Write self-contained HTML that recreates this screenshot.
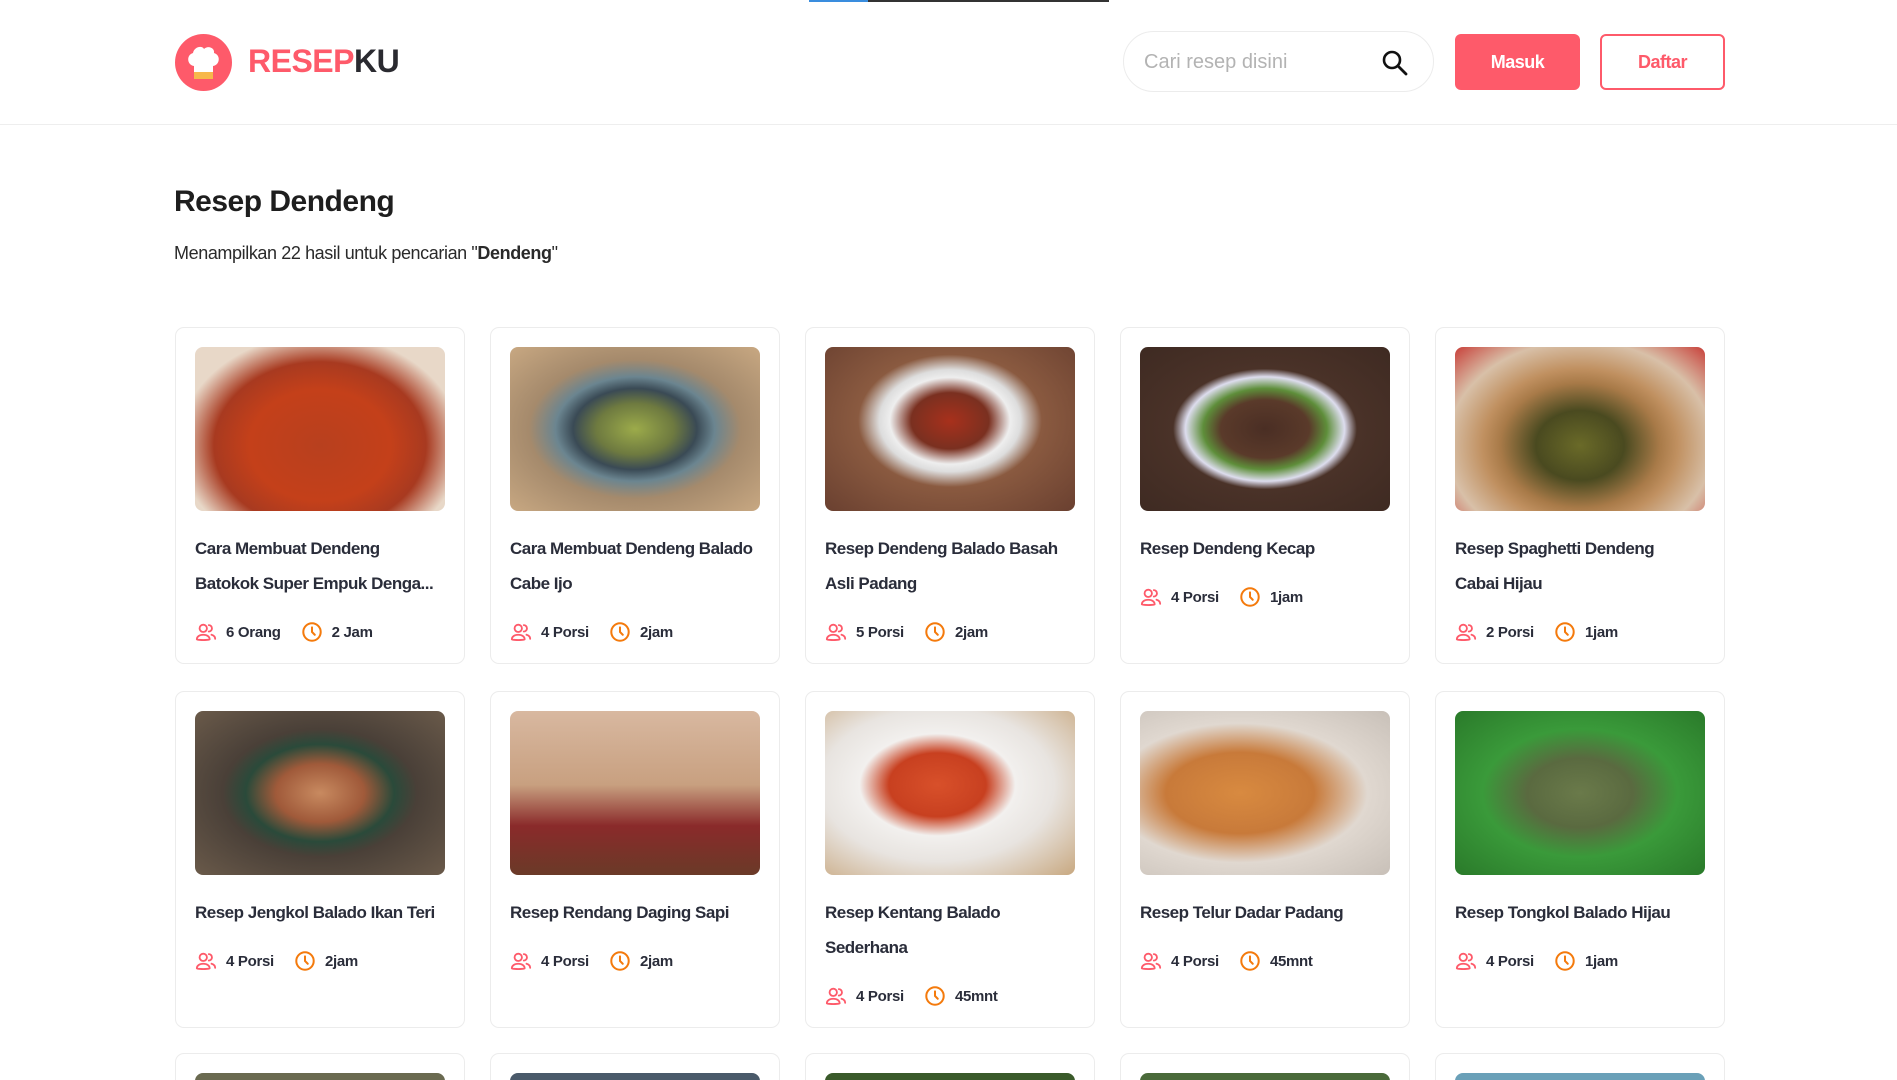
<!DOCTYPE html>
<html style="height:1080px;overflow:hidden"><head><meta charset="utf-8">
<style>
*{box-sizing:border-box;margin:0;padding:0}
body{width:1897px;height:1080px;overflow:hidden;background:#fff;font-family:"Liberation Sans",Roboto,sans-serif;color:#222;position:relative}
.bar{position:absolute;top:0;left:809px;width:300px;height:2px;background:#333}
.bar i{position:absolute;left:0;top:0;width:59px;height:2px;background:#3a8dde}
header{position:absolute;top:0;left:0;width:1897px;height:125px;border-bottom:1px solid #eee}
.logo{position:absolute;left:175px;top:34px;width:57px;height:57px;border-radius:50%;background:#fe5a6a}
.brand{position:absolute;left:248px;top:43px;font-size:32px;font-weight:bold;letter-spacing:-0.5px;color:#fe5a6a}
.brand b{color:#2a2a30}
.search{position:absolute;left:1123px;top:31px;width:311px;height:61px;border:1px solid #ececec;border-radius:31px}
.search span{position:absolute;left:20px;top:19px;font-size:20px;color:#b3b3b3}
.search svg{position:absolute;left:257px;top:17px}
.masuk{position:absolute;left:1455px;top:34px;width:125px;height:56px;background:#fe5a6a;border-radius:6px;color:#fff;font-weight:bold;font-size:18px;text-align:center;line-height:56px;letter-spacing:-0.5px}
.daftar{position:absolute;left:1600px;top:34px;width:125px;height:56px;border:2px solid #fe5a6a;border-radius:6px;color:#fe5a6a;font-weight:bold;font-size:18px;text-align:center;line-height:52px;letter-spacing:-0.5px}
h1{position:absolute;left:174px;top:185px;font-size:30px;font-weight:bold;color:#1e1e1e;letter-spacing:-0.5px}
.sub{position:absolute;left:174px;top:243px;font-size:18px;color:#2a2a2a;letter-spacing:-0.4px}
.card{position:absolute;width:290px;height:337px;border:1px solid #ececec;border-radius:9px;padding:19px;overflow:hidden}
.img{width:250px;height:164px;border-radius:8px}
.t{margin-top:20px;font-size:17px;font-weight:bold;line-height:35px;color:#2a2d3a;white-space:nowrap;overflow:hidden;text-overflow:ellipsis;letter-spacing:-0.5px}
.m{margin-top:19px;height:24px;display:flex;align-items:center;font-size:15px;font-weight:bold;color:#2a2d3a;letter-spacing:-0.3px}
.m svg{margin-right:9px}
.m .s{margin-right:20px}
.r3{height:27px;border-bottom:none;border-radius:9px 9px 0 0;padding:19px 19px 0}
.r3 .img{height:8px;border-radius:8px 8px 0 0}
</style></head><body>
<div class="bar"><i></i></div>
<header>
<div class="logo"><svg width="57" height="57" viewBox="0 0 57 57"><path d="M19 32 C12 31 11 21 18 19 C19 13 27 11 29 15 C33 11 40 14 39 19 C46 21 45 31 38 32 L38 40 L19 40Z" fill="#fff"/><rect x="19" y="38" width="19" height="7" fill="#f7b84b"/></svg></div>
<div class="brand">RESEP<b>KU</b></div>
<div class="search"><span>Cari resep disini</span><svg width="28" height="28" viewBox="0 0 28 28"><circle cx="11" cy="11" r="8" fill="none" stroke="#111" stroke-width="2.6"/><path d="M17 17 L25 25" stroke="#111" stroke-width="2.8" stroke-linecap="round"/></svg></div>
<div class="masuk">Masuk</div>
<div class="daftar">Daftar</div>
</header>
<h1>Resep Dendeng</h1>
<div class="sub">Menampilkan 22 hasil untuk pencarian "<b>Dendeng</b>"</div>

<svg width="0" height="0" style="position:absolute"><defs>
<symbol id="p" viewBox="0 0 24 24"><circle cx="9" cy="8" r="4" fill="none" stroke="#fe5a6a" stroke-width="2"/><path d="M2 20c0-3 3-5 7-5s7 2 7 5c0 1-14 1-14 0z" fill="none" stroke="#fe5a6a" stroke-width="2"/><path d="M15 4.5a3.5 3.5 0 0 1 0 7M18 15c2 .6 4 2 4 4.5" fill="none" stroke="#fe5a6a" stroke-width="2" stroke-linecap="round"/></symbol>
<symbol id="c" viewBox="0 0 24 24"><circle cx="12" cy="12" r="9.5" fill="none" stroke="#f47a0c" stroke-width="2.2"/><path d="M12 7v5l3 3" fill="none" stroke="#f47a0c" stroke-width="2.2" stroke-linecap="round"/></symbol>
</defs></svg>

<div class="card" style="left:175px;top:327px"><div class="img" style="background:radial-gradient(ellipse at 50% 60%,#b8401e 0,#c4401a 40%,#a83a20 60%,#e8d8c8 80%),#f0e0d0"></div><div class="t">Cara Membuat Dendeng<br>Batokok Super Empuk Denga...</div><div class="m"><svg width="22" height="22"><use href="#p"/></svg><span class="s">6 Orang</span><svg width="22" height="22"><use href="#c"/></svg>2 Jam</div></div>
<div class="card" style="left:490px;top:327px"><div class="img" style="background:radial-gradient(ellipse at 50% 50%,#9cab4a 0,#6e7a40 22%,#3a4a55 35%,#6b8590 45%,#a58a6c 60%,#c8a882 100%)"></div><div class="t">Cara Membuat Dendeng Balado<br>Cabe Ijo</div><div class="m"><svg width="22" height="22"><use href="#p"/></svg><span class="s">4 Porsi</span><svg width="22" height="22"><use href="#c"/></svg>2jam</div></div>
<div class="card" style="left:805px;top:327px"><div class="img" style="background:radial-gradient(ellipse at 50% 45%,#a8301c 0,#7a3020 22%,#eee 34%,#ddd 40%,#8a5a40 52%,#6a4030 100%)"></div><div class="t">Resep Dendeng Balado Basah<br>Asli Padang</div><div class="m"><svg width="22" height="22"><use href="#p"/></svg><span class="s">5 Porsi</span><svg width="22" height="22"><use href="#c"/></svg>2jam</div></div>
<div class="card" style="left:1120px;top:327px"><div class="img" style="background:radial-gradient(ellipse at 50% 50%,#4a2e24 0,#5a3a2a 25%,#5e8e3a 35%,#dde 45%,#4a3228 52%,#3e2a22 100%)"></div><div class="t">Resep Dendeng Kecap</div><div class="m"><svg width="22" height="22"><use href="#p"/></svg><span class="s">4 Porsi</span><svg width="22" height="22"><use href="#c"/></svg>1jam</div></div>
<div class="card" style="left:1435px;top:327px"><div class="img" style="background:radial-gradient(ellipse at 50% 60%,#6a6a28 0,#4a4a20 25%,#a87a48 45%,#c09060 55%,#d8c0a8 75%,#c8403a 100%)"></div><div class="t">Resep Spaghetti Dendeng<br>Cabai Hijau</div><div class="m"><svg width="22" height="22"><use href="#p"/></svg><span class="s">2 Porsi</span><svg width="22" height="22"><use href="#c"/></svg>1jam</div></div>

<div class="card" style="left:175px;top:691px"><div class="img" style="background:radial-gradient(ellipse at 50% 50%,#c88a60 0,#a05a3a 25%,#2a4a3a 42%,#4a4038 55%,#6a5a4a 100%)"></div><div class="t">Resep Jengkol Balado Ikan Teri</div><div class="m"><svg width="22" height="22"><use href="#p"/></svg><span class="s">4 Porsi</span><svg width="22" height="22"><use href="#c"/></svg>2jam</div></div>
<div class="card" style="left:490px;top:691px"><div class="img" style="background:linear-gradient(180deg,#d8b8a0 0,#c8a080 45%,#8a2a2a 70%,#6a3a28 100%)"></div><div class="t">Resep Rendang Daging Sapi</div><div class="m"><svg width="22" height="22"><use href="#p"/></svg><span class="s">4 Porsi</span><svg width="22" height="22"><use href="#c"/></svg>2jam</div></div>
<div class="card" style="left:805px;top:691px"><div class="img" style="background:radial-gradient(ellipse at 45% 45%,#d8502a 0,#c84020 25%,#f2f0ee 40%,#e8e4e0 60%,#c8a880 100%)"></div><div class="t">Resep Kentang Balado<br>Sederhana</div><div class="m"><svg width="22" height="22"><use href="#p"/></svg><span class="s">4 Porsi</span><svg width="22" height="22"><use href="#c"/></svg>45mnt</div></div>
<div class="card" style="left:1120px;top:691px"><div class="img" style="background:radial-gradient(ellipse at 40% 50%,#d88a40 0,#c87a3a 35%,#e0d8d0 60%,#c8c0b8 100%)"></div><div class="t">Resep Telur Dadar Padang</div><div class="m"><svg width="22" height="22"><use href="#p"/></svg><span class="s">4 Porsi</span><svg width="22" height="22"><use href="#c"/></svg>45mnt</div></div>
<div class="card" style="left:1435px;top:691px"><div class="img" style="background:radial-gradient(ellipse at 50% 50%,#6a7a4a 0,#5a6a40 30%,#3a9a3a 55%,#2a7a2a 100%)"></div><div class="t">Resep Tongkol Balado Hijau</div><div class="m"><svg width="22" height="22"><use href="#p"/></svg><span class="s">4 Porsi</span><svg width="22" height="22"><use href="#c"/></svg>1jam</div></div>

<div class="card r3" style="left:175px;top:1053px"><div class="img" style="background:#6a6a50"></div></div>
<div class="card r3" style="left:490px;top:1053px"><div class="img" style="background:#4a5a6a"></div></div>
<div class="card r3" style="left:805px;top:1053px"><div class="img" style="background:#3a5a2a"></div></div>
<div class="card r3" style="left:1120px;top:1053px"><div class="img" style="background:#4a6a3a"></div></div>
<div class="card r3" style="left:1435px;top:1053px"><div class="img" style="background:#6aa0b8"></div></div>
</body></html>
